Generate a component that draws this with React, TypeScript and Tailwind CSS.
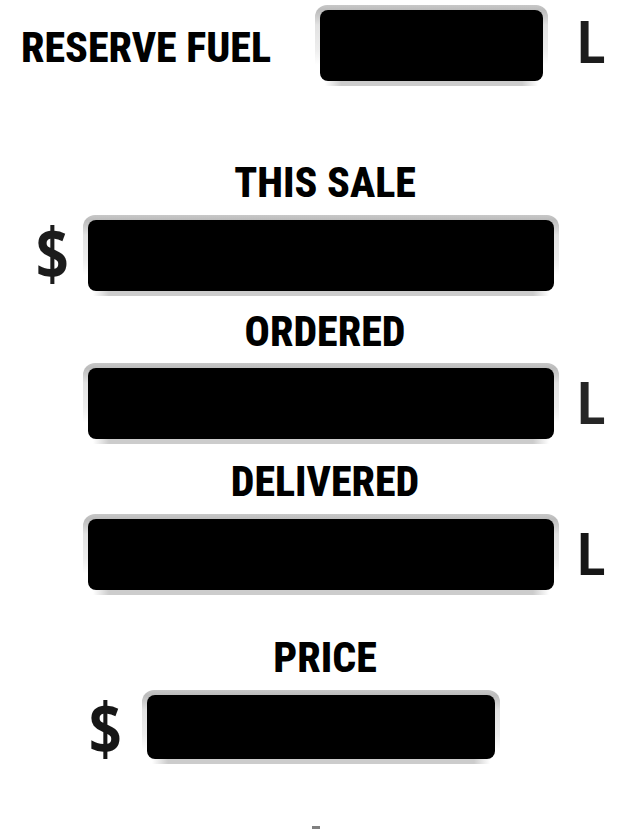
type ReadoutProps = { id: string; label: string; short?: boolean };

function Readout({ id, label, short = false }: ReadoutProps) {
  return (
    <div className="w-full rounded-xl bg-[linear-gradient(to_right,transparent,#cccccc_16px,#cccccc_calc(100%-16px),transparent),linear-gradient(to_bottom,#c8c8c8,#bbbbbb_5px,#e2e2e2_20px,#eeeeee_45px,#ffffff_60px)] bg-[length:calc(100%-20px)_5px,100%_100%] bg-[position:bottom,top] bg-no-repeat p-[5px]">
      <input
        id={id}
        type="text"
        readOnly
        aria-label={label}
        className={
          "block w-full rounded-lg bg-black px-4 text-right font-['Roboto_Condensed',sans-serif] text-4xl text-white outline-none " +
          (short ? "h-16" : "h-[71px]")
        }
      />
    </div>
  );
}

function Litres({ tone }: { tone: string }) {
  return (
    <span className={"w-[65px] justify-self-end font-['Roboto_Condensed',sans-serif] text-[60px] leading-[60px] font-semibold " + tone}>
      L
    </span>
  );
}

function Dollar({ tone }: { tone: string }) {
  return (
    <span className={"text-right font-['Open_Sans_Condensed',sans-serif] text-[72px] leading-[72px] font-semibold " + tone}>
      $
    </span>
  );
}

const heading = "block font-['Roboto_Condensed',sans-serif] text-[42px] leading-[48px] font-extrabold text-black";

export default function App() {
  return (
    <main className="overflow-hidden bg-white">
      <section className="grid grid-cols-[315px_1fr_94px] items-center pt-[5px]">
        <label htmlFor="reserve" className={heading + " pt-1 pl-[21px]"}>RESERVE FUEL</label>
        <Readout id="reserve" label="Reserve fuel" />
        <Litres tone="pb-1.5 text-[#1c1c1c]" />
      </section>

      <section className="pt-[73px]">
        <label htmlFor="sale" className={heading + " pl-2 text-center"}>THIS SALE</label>
        <div className="mt-2 grid grid-cols-[83px_1fr_83px] items-center">
          <Dollar tone="pr-3.5 pb-2 text-[#1c1c1c]" />
          <Readout id="sale" label="This sale" />
        </div>
      </section>

      <section className="pt-3">
        <label htmlFor="ordered" className={heading + " pl-2 text-center"}>ORDERED</label>
        <div className="mt-[7px] grid grid-cols-[83px_1fr_83px] items-center">
          <span />
          <Readout id="ordered" label="Ordered" />
          <Litres tone="text-[#262626]" />
        </div>
      </section>

      <section className="pt-[14px]">
        <label htmlFor="delivered" className={heading + " pl-2 text-center"}>DELIVERED</label>
        <div className="mt-2 grid grid-cols-[83px_1fr_83px] items-center">
          <span />
          <Readout id="delivered" label="Delivered" />
          <Litres tone="text-[#161616]" />
        </div>
      </section>

      <section className="pt-[39px]">
        <label htmlFor="price" className={heading + " pl-2 text-center"}>PRICE</label>
        <div className="mt-2 grid grid-cols-[142px_1fr_142px] items-center">
          <Dollar tone="pr-5 text-[#161616]" />
          <Readout id="price" label="Price" short />
        </div>
      </section>

      <div className="flex justify-center pt-[62px] pr-[10px]">
        <div className="h-[3px] w-2 bg-[#808080]" />
      </div>
    </main>
  );
}
